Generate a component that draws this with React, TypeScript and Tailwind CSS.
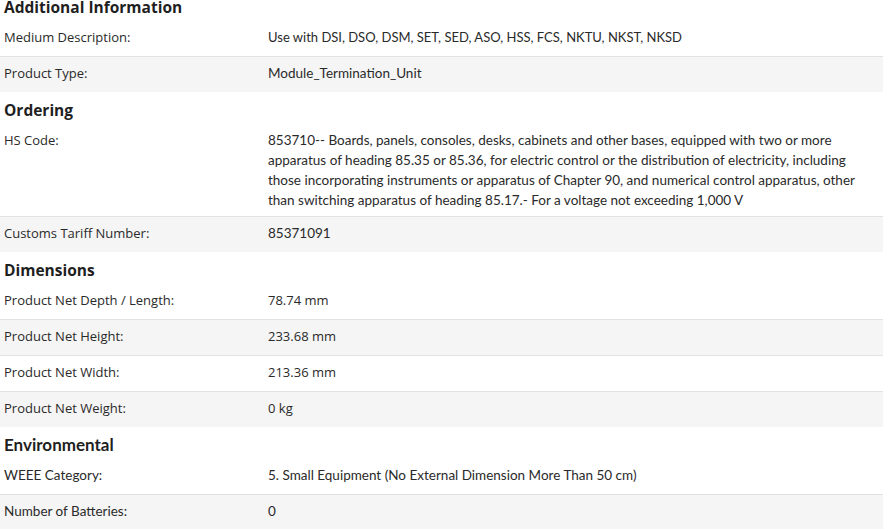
type Row = {
  label: string;
  value: string;
  narrowLabel?: boolean;
  narrowValue?: boolean;
  tight?: boolean;
};
type Section = { title: string; narrowTitle?: boolean; rows: Row[] };

const sections: Section[] = [
  {
    title: "Additional Information",
    rows: [
      {
        label: "Medium Description:",
        value: "Use with DSI, DSO, DSM, SET, SED, ASO, HSS, FCS, NKTU, NKST, NKSD",
        narrowValue: true,
        tight: true,
      },
      { label: "Product Type:", value: "Module_Termination_Unit", narrowValue: true },
    ],
  },
  {
    title: "Ordering",
    rows: [
      {
        label: "HS Code:",
        value:
          "853710-- Boards, panels, consoles, desks, cabinets and other bases, equipped with two or more apparatus of heading 85.35 or 85.36, for electric control or the distribution of electricity, including those incorporating instruments or apparatus of Chapter 90, and numerical control apparatus, other than switching apparatus of heading 85.17.- For a voltage not exceeding 1,000 V",
        narrowValue: true,
      },
      { label: "Customs Tariff Number:", value: "85371091", narrowValue: true },
    ],
  },
  {
    title: "Dimensions",
    rows: [
      { label: "Product Net Depth / Length:", value: "78.74 mm" },
      { label: "Product Net Height:", value: "233.68 mm" },
      { label: "Product Net Width:", value: "213.36 mm" },
      { label: "Product Net Weight:", value: "0 kg" },
    ],
  },
  {
    title: "Environmental",
    narrowTitle: true,
    rows: [
      {
        label: "WEEE Category:",
        value: "5. Small Equipment (No External Dimension More Than 50 cm)",
        narrowLabel: true,
        narrowValue: true,
      },
      { label: "Number of Batteries:", value: "0", narrowLabel: true, narrowValue: true },
    ],
  },
];

const wide = "font-['Open_Sans',sans-serif] text-[13px]";
const narrow = "font-['Lato',sans-serif] text-[13.5px]";

export default function App() {
  return (
    <div className="w-[883px] h-[529px] overflow-hidden bg-white text-[#2a2a2a]">
      <div className="-mt-[11px]">
        {sections.map((section) => (
          <div key={section.title}>
            {/* Section heading */}
            <h3
              className={`h-[31px] pt-[7px] pl-1 leading-[22px] font-bold text-[#1f1f1f] ${
                section.narrowTitle
                  ? "font-['Lato',sans-serif] text-[17px]"
                  : "font-['Open_Sans',sans-serif] text-[15.5px]"
              }`}
            >
              {section.title}
            </h3>

            {/* Rows */}
            {section.rows.map((row, i) => (
              <div
                key={row.label}
                className={`grid grid-cols-[264px_1fr] min-h-[36px] pl-1 py-[6px] leading-5 border-t ${
                  i === 0
                    ? "border-transparent"
                    : i % 2 === 1
                      ? "bg-[#f5f5f5] border-[#e2e2e2]"
                      : "border-[#e2e2e2]"
                }`}
              >
                <div className={row.narrowLabel ? narrow : wide}>{row.label}</div>
                <div
                  className={`pr-3 ${
                    row.tight ? "font-['Lato',sans-serif] text-[13px]" : row.narrowValue ? narrow : wide
                  }`}
                >
                  {row.value}
                </div>
              </div>
            ))}
          </div>
        ))}
      </div>
    </div>
  );
}
